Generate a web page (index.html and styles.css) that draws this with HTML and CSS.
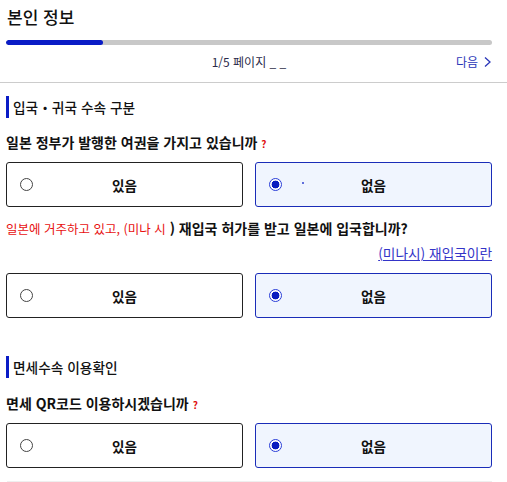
FILE: index.html
```html
<!DOCTYPE html>
<html lang="ko">
<head>
<meta charset="utf-8">
<link rel="stylesheet" href="styles.css">
</head>
<body>
<header class="page-head">
  <h1 class="title">본인 정보</h1>
  <div class="progress"><div class="progress-fill" style="width:20%"></div></div>
  <div class="pager">
    <span class="pager-count">1/5 페이지 _ _</span>
    <a class="pager-next" href="#">다음
      <svg class="chev" width="9" height="12" viewBox="0 0 9 12"><path d="M2 1.5 L7 6 L2 10.5" fill="none" stroke="#2a36b8" stroke-width="1.3"/></svg>
    </a>
  </div>
</header>
<main class="content">
  <h2 class="sec-title">입국・귀국 수속 구분</h2>
  <p class="question">일본 정부가 발행한 여권을 가지고 있습니까 <span class="help">?</span></p>
  <div class="options">
    <label class="opt"><span class="radio"></span><span class="opt-text">있음</span></label>
    <label class="opt opt-on"><span class="radio radio-on"></span><span class="opt-text">없음</span><span class="speck"></span></label>
  </div>
  <p class="question q2"><span class="warn">일본에 거주하고 있고, (미나 시</span> ) 재입국 허가를 받고 일본에 입국합니까?</p>
  <div class="link-row"><a class="link" href="#">(미나시) 재입국이란</a></div>
  <div class="options">
    <label class="opt"><span class="radio"></span><span class="opt-text">있음</span></label>
    <label class="opt opt-on"><span class="radio radio-on"></span><span class="opt-text">없음</span></label>
  </div>
  <h2 class="sec-title sec-two">면세수속 이용확인</h2>
  <p class="question">면세 QR코드 이용하시겠습니까 <span class="help">?</span></p>
  <div class="options">
    <label class="opt"><span class="radio"></span><span class="opt-text">있음</span></label>
    <label class="opt opt-on"><span class="radio radio-on"></span><span class="opt-text">없음</span></label>
  </div>
  <div class="foot-line"></div>
</main>
</body>
</html>
```

FILE: styles.css
```css
* { box-sizing: border-box; }
html, body { margin: 0; padding: 0; background: #fff; }
body {
  font-family: "Noto Sans CJK KR", "Noto Sans", sans-serif;
  color: #111;
  width: 507px;
  overflow: hidden;
}
.page-head {
  padding: 5px 15px 11px 6px;
  border-bottom: 1px solid #cccccc;
}
.title {
  margin: 0 0 0 1px;
  font-size: 17px;
  line-height: 24px;
  font-weight: 500;
  color: #111;
}
.progress {
  margin-top: 11px;
  height: 5px;
  border-radius: 3px;
  background: #c8c8c8;
  overflow: hidden;
}
.progress-fill {
  height: 100%;
  background: #0a1cc6;
  border-radius: 3px;
}
.pager {
  margin-top: 8px;
  height: 18px;
  display: grid;
  grid-template-columns: 1fr auto 1fr;
  align-items: center;
  font-size: 12px;
  line-height: 18px;
}
.pager-count {
  grid-column: 2;
  color: #2a2a4a;
}
.pager-next {
  grid-column: 3;
  justify-self: end;
  color: #2a36b8;
  text-decoration: none;
  display: flex;
  align-items: center;
  gap: 5px;
}
.chev { display: block; }
.content {
  padding: 0 15px 0 6px;
}
.sec-title {
  margin: 13px 0 0 0;
  height: 22px;
  line-height: 22px;
  border-left: 3px solid #0a1cc6;
  padding-left: 4px;
  font-size: 13.7px;
  font-weight: 500;
  color: #111;
}
.sec-two { margin-top: 38px; }
.question {
  margin: 14px 0 0 0;
  height: 20px;
  font-size: 14px;
  line-height: 20px;
  font-weight: 700;
  color: #111;
  white-space: nowrap;
}
.sec-two + .question { margin-top: 15px; }
.help {
  color: #e01010;
  font-size: 10px;
  font-weight: 700;
  line-height: 1;
}
.q2 { margin-top: 11px; }
.warn {
  color: #e81010;
  font-size: 12.5px;
  font-weight: 400;
  line-height: 1;
}
.link-row {
  margin-top: 5px;
  height: 20px;
  line-height: 20px;
  display: flex;
  justify-content: flex-end;
}
.link {
  font-size: 13.7px;
  color: #3434c8;
  text-decoration: underline;
}
.options {
  margin-top: 10px;
  display: grid;
  grid-template-columns: 1fr 1fr;
  gap: 12px;
}
.opt {
  position: relative;
  height: 45px;
  border: 1px solid #222;
  border-radius: 3px;
  background: #fff;
  display: grid;
  grid-template-columns: 1fr auto 1fr;
  align-items: center;
  padding: 0 13px;
}
.opt-on {
  border-color: #1a2cb8;
  background: #f0f5fe;
}
.radio {
  grid-column: 1;
  justify-self: start;
  width: 13px;
  height: 13px;
  border-radius: 50%;
  border: 1.3px solid #444;
  background: #fff;
}
.radio-on {
  border: 1.5px solid #2a3ed8;
  background: radial-gradient(circle, #0a1cc0 0 3.6px, #fff 4.2px);
}
.opt-text {
  grid-column: 2;
  font-size: 13.5px;
  font-weight: 700;
  color: #111;
}
.speck {
  position: absolute;
  left: 46px;
  top: 19px;
  width: 2px;
  height: 2px;
  border-radius: 50%;
  background: #3040d0;
}
.foot-line {
  margin-top: 13px;
  margin-left: 1px;
  height: 1px;
  background: #efefef;
}
```
